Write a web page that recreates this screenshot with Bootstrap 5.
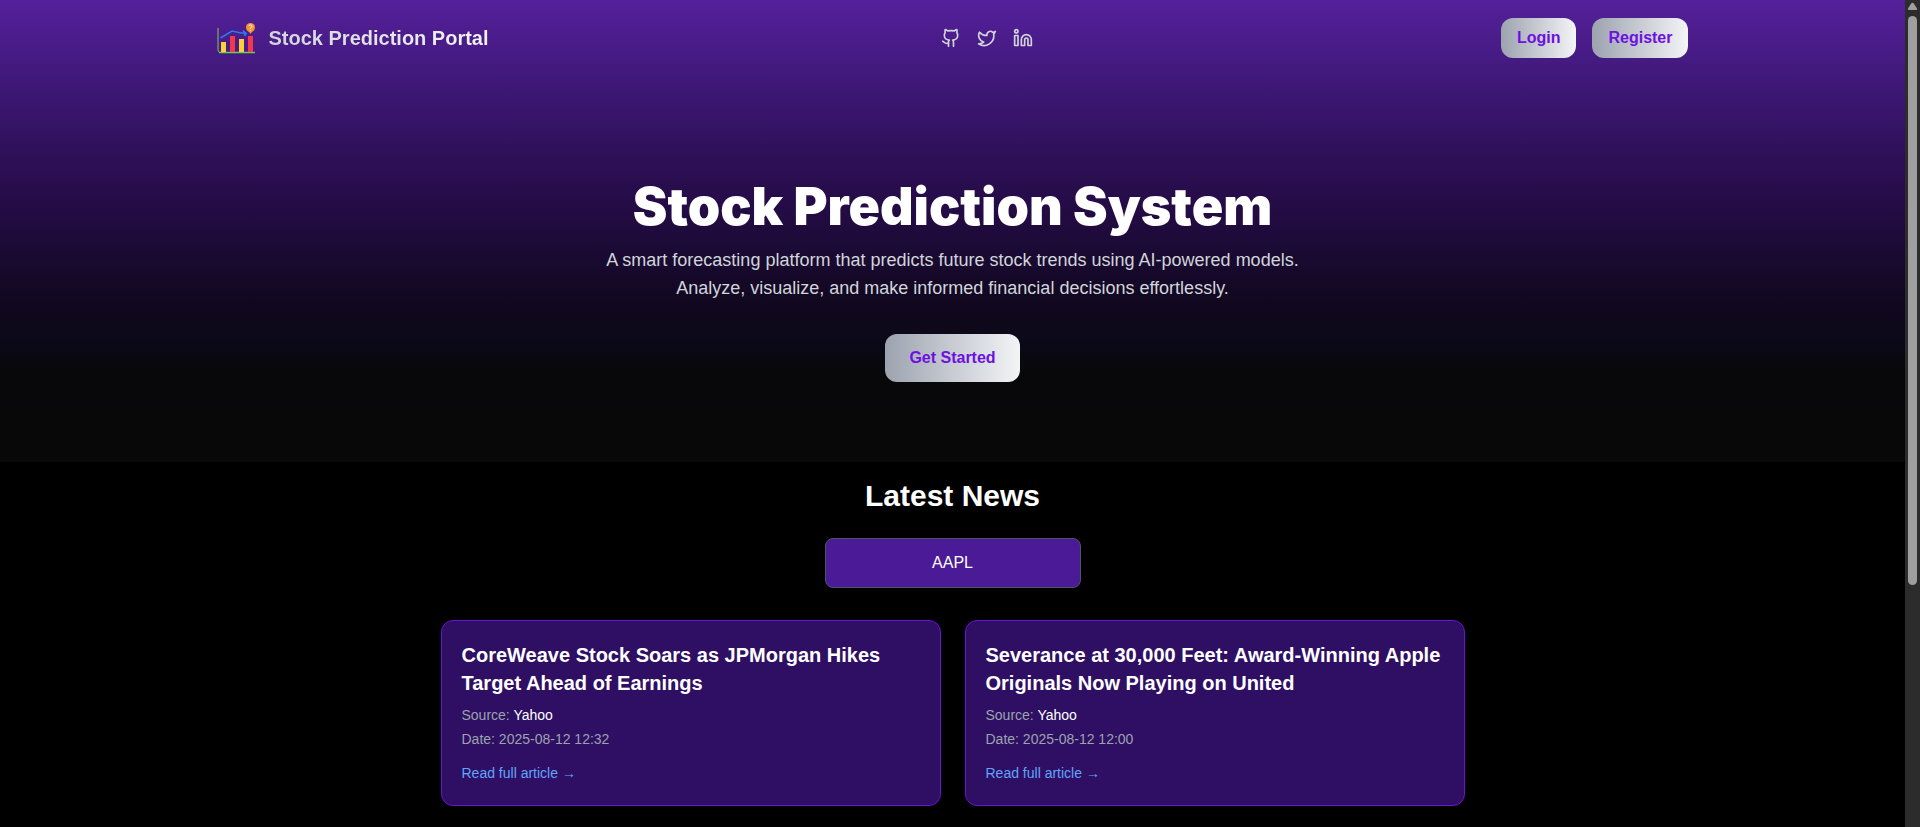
<!DOCTYPE html>
<html lang="en">
<head>
<meta charset="utf-8">
<meta name="viewport" content="width=device-width, initial-scale=1">
<title>Stock Prediction Portal</title>
<link href="https://cdn.jsdelivr.net/npm/bootstrap@5.3.0/dist/css/bootstrap.min.css" rel="stylesheet">
<style>
  body { background: #000; color: #fff; font-family: "Liberation Sans", Arial, sans-serif; font-size: 16px; line-height: 24px; }
  .hero { background: linear-gradient(#55209b 0%, #3a1670 22%, #2f105a 33%, #250c47 44%, #1b0a34 54%, #120820 65%, #0b0918 74%, #08080a 81%, #080808 100%); padding-bottom: 80px; }
  .site-nav { max-width: 1536px; padding: 18px 32px; }
  .brand-text { font-size: 20px; line-height: 28px; font-weight: 700; background: linear-gradient(90deg, #d1d5db, #f3f4f6); -webkit-background-clip: text; background-clip: text; color: transparent; }
  .social a { color: #d1d5db; display: block; line-height: 0; }
  .social svg { width: 20px; height: 20px; fill: none; stroke: currentColor; stroke-width: 2; stroke-linecap: round; stroke-linejoin: round; }
  .btn-silver { --bs-btn-padding-x: 16px; --bs-btn-padding-y: 8px; --bs-btn-border-width: 0; --bs-btn-border-radius: 12px; --bs-btn-line-height: 24px; --bs-btn-font-weight: 700; --bs-btn-color: #6d10e0; --bs-btn-hover-color: #6d10e0; background: linear-gradient(90deg, #9ca3af, #f3f4f6); }
  .btn-silver-lg { --bs-btn-padding-x: 24px; --bs-btn-padding-y: 12px; }
  .hero-title { font-family: Inter, "Liberation Sans", sans-serif; font-weight: 900; font-size: 52px; line-height: 62px; }
  .hero-copy { max-width: 720px; font-size: 18px; line-height: 28px; color: #d1d5db; }
  .news-title { font-size: 30px; line-height: 36px; font-weight: 700; }
  .ticker { width: 256px; height: 50px; background: #4b1a96; color: #fff; border: 1px solid #4b5563; border-radius: 8px; appearance: none; text-align: center; text-align-last: center; }
  .news-list { max-width: 1024px; display: grid; grid-template-columns: repeat(auto-fit, minmax(320px, 1fr)); gap: 24px; }
  .news-card { background: #2e0f63; color: #fff; border: 1px solid #6d10d8; border-radius: 12px; padding: 20px; }
  .news-card h3 { font-size: 20px; line-height: 28px; font-weight: 700; margin-bottom: 8px; }
  .meta { font-size: 14px; line-height: 20px; color: #9ca3af; }
  .read-row { margin-top: 12px; }
  .read-link { font-size: 14px; color: #60a5fa; text-decoration: none; }
  .scroll-track { width: 15px; background: #2c2c2c; padding-top: 2px; }
  .scroll-track svg { width: 11px; height: 10px; fill: #9f9f9f; }
  .scroll-thumb { width: 9px; height: 569px; border-radius: 5px; background: #9f9f9f; }
</style>
</head>
<body>
<div class="d-flex min-vh-100">
  <div class="flex-grow-1">
    <header class="hero">
      <nav class="site-nav mx-auto d-flex flex-wrap align-items-center justify-content-between" aria-label="Main">
        <a href="#" class="d-flex align-items-center gap-2 text-decoration-none">
          <svg width="44" height="40" viewBox="0 0 44 40" fill="none" aria-hidden="true">
            <path d="M1 10V32L2 34" stroke="#7cc66a" stroke-width="1"/>
            <path d="M2 34.500H38" stroke="#6fcf4a" stroke-width="1.500"/>
            <path d="M4 24h5v10H4zM22 21h5v13h-5z" fill="#fbd13a"/>
            <path d="M13 18h5v16h-5zM31 18h5v16h-5z" fill="#f0394c"/>
            <path d="M3.500 20L15 13 24 15H28" stroke="#2b7bea" stroke-width="1.500"/>
            <path d="M26 12.500l3.500 2.500-1.500 3z" fill="#2b7bea" stroke="#2b7bea"/>
            <path d="M33.500 16l-2.500-3.500h5z" fill="#f79433"/>
            <circle cx="33.500" cy="9.500" r="4.500" fill="#f79433"/>
            <path d="M32 8c.3-1.700 3-1.500 3 .2 0 1.300-1.500 1.200-1.500 2.600M33.500 11.800v1" stroke="#fff"/>
          </svg>
          <span class="brand-text">Stock Prediction Portal</span>
        </a>
        <div class="social d-flex gap-3 me-3">
          <a href="#" aria-label="GitHub"><svg viewBox="0 0 24 24"><path d="M15 22v-4a4.800 4.800 0 0 0-1-3.500c3 0 6-2 6-5.500.080-1.250-.270-2.480-1-3.500.280-1.150.280-2.350 0-3.500 0 0-1 0-3 1.500-2.640-.5-5.360-.5-8 0C6 2 5 2 5 2c-.3 1.150-.3 2.350 0 3.500A5.403 5.403 0 0 0 4 9c0 3.500 3 5.500 6 5.500-.390.490-.680 1.050-.850 1.650-.170.600-.220 1.230-.150 1.850v4"/><path d="M9 18c-4.510 2-5-2-7-2"/></svg></a>
          <a href="#" aria-label="Twitter"><svg viewBox="0 0 24 24"><path d="M22 4s-.7 2.100-2 3.400c1.600 10-9.400 17.300-18 11.600 2.200.1 4.400-.6 6-2C3 15.500.5 9.600 3 5c2.200 2.600 5.600 4.100 9 4-.9-4.200 4-6.600 7-3.800 1.100 0 3-1.200 3-1.200z"/></svg></a>
          <a href="#" aria-label="LinkedIn"><svg viewBox="0 0 24 24"><path d="M16 8a6 6 0 0 1 6 6v7h-4v-7a2 2 0 0 0-4 0v7h-4v-7a6 6 0 0 1 6-6z"/><rect x="2" y="9" width="4" height="12"/><circle cx="4" cy="4" r="2"/></svg></a>
        </div>
        <div class="d-flex gap-3">
          <button type="button" class="btn btn-silver">Login</button>
          <button type="button" class="btn btn-silver">Register</button>
        </div>
      </nav>
      <section class="text-center px-3 pt-5">
        <h1 class="hero-title mt-5 mb-2 pt-1">Stock Prediction System</h1>
        <p class="hero-copy mx-auto mb-4">A smart forecasting platform that predicts future stock trends using AI-powered models. Analyze, visualize, and make informed financial decisions effortlessly.</p>
        <button type="button" class="btn btn-silver btn-silver-lg mt-2">Get Started</button>
      </section>
    </header>
    <main class="px-3 py-3 text-center">
      <h2 class="news-title mb-4">Latest News</h2>
      <select class="ticker" aria-label="Ticker"><option>AAPL</option></select>
      <div class="news-list mx-auto text-start mt-4 pt-2">
        <article class="news-card">
          <h3>CoreWeave Stock Soars as JPMorgan Hikes Target Ahead of Earnings</h3>
          <p class="meta mb-1">Source: <span class="text-white">Yahoo</span></p>
          <p class="meta mb-0">Date: 2025-08-12 12:32</p>
          <div class="read-row"><a href="#" class="read-link">Read full article →</a></div>
        </article>
        <article class="news-card">
          <h3>Severance at 30,000 Feet: Award-Winning Apple Originals Now Playing on United</h3>
          <p class="meta mb-1">Source: <span class="text-white">Yahoo</span></p>
          <p class="meta mb-0">Date: 2025-08-12 12:00</p>
          <div class="read-row"><a href="#" class="read-link">Read full article →</a></div>
        </article>
      </div>
    </main>
  </div>
  <div class="scroll-track flex-shrink-0 d-flex flex-column align-items-center gap-1" aria-hidden="true">
    <svg viewBox="0 0 11 10"><path d="M4.200 1.500Q5.500 0 6.800 1.500L10 6.500Q10.500 8 9 8H2Q.5 8 1 6.500Z"/></svg>
    <div class="scroll-thumb"></div>
  </div>
</div>
<script src="https://cdn.jsdelivr.net/npm/bootstrap@5.3.0/dist/js/bootstrap.bundle.min.js"></script>
</body>
</html>
